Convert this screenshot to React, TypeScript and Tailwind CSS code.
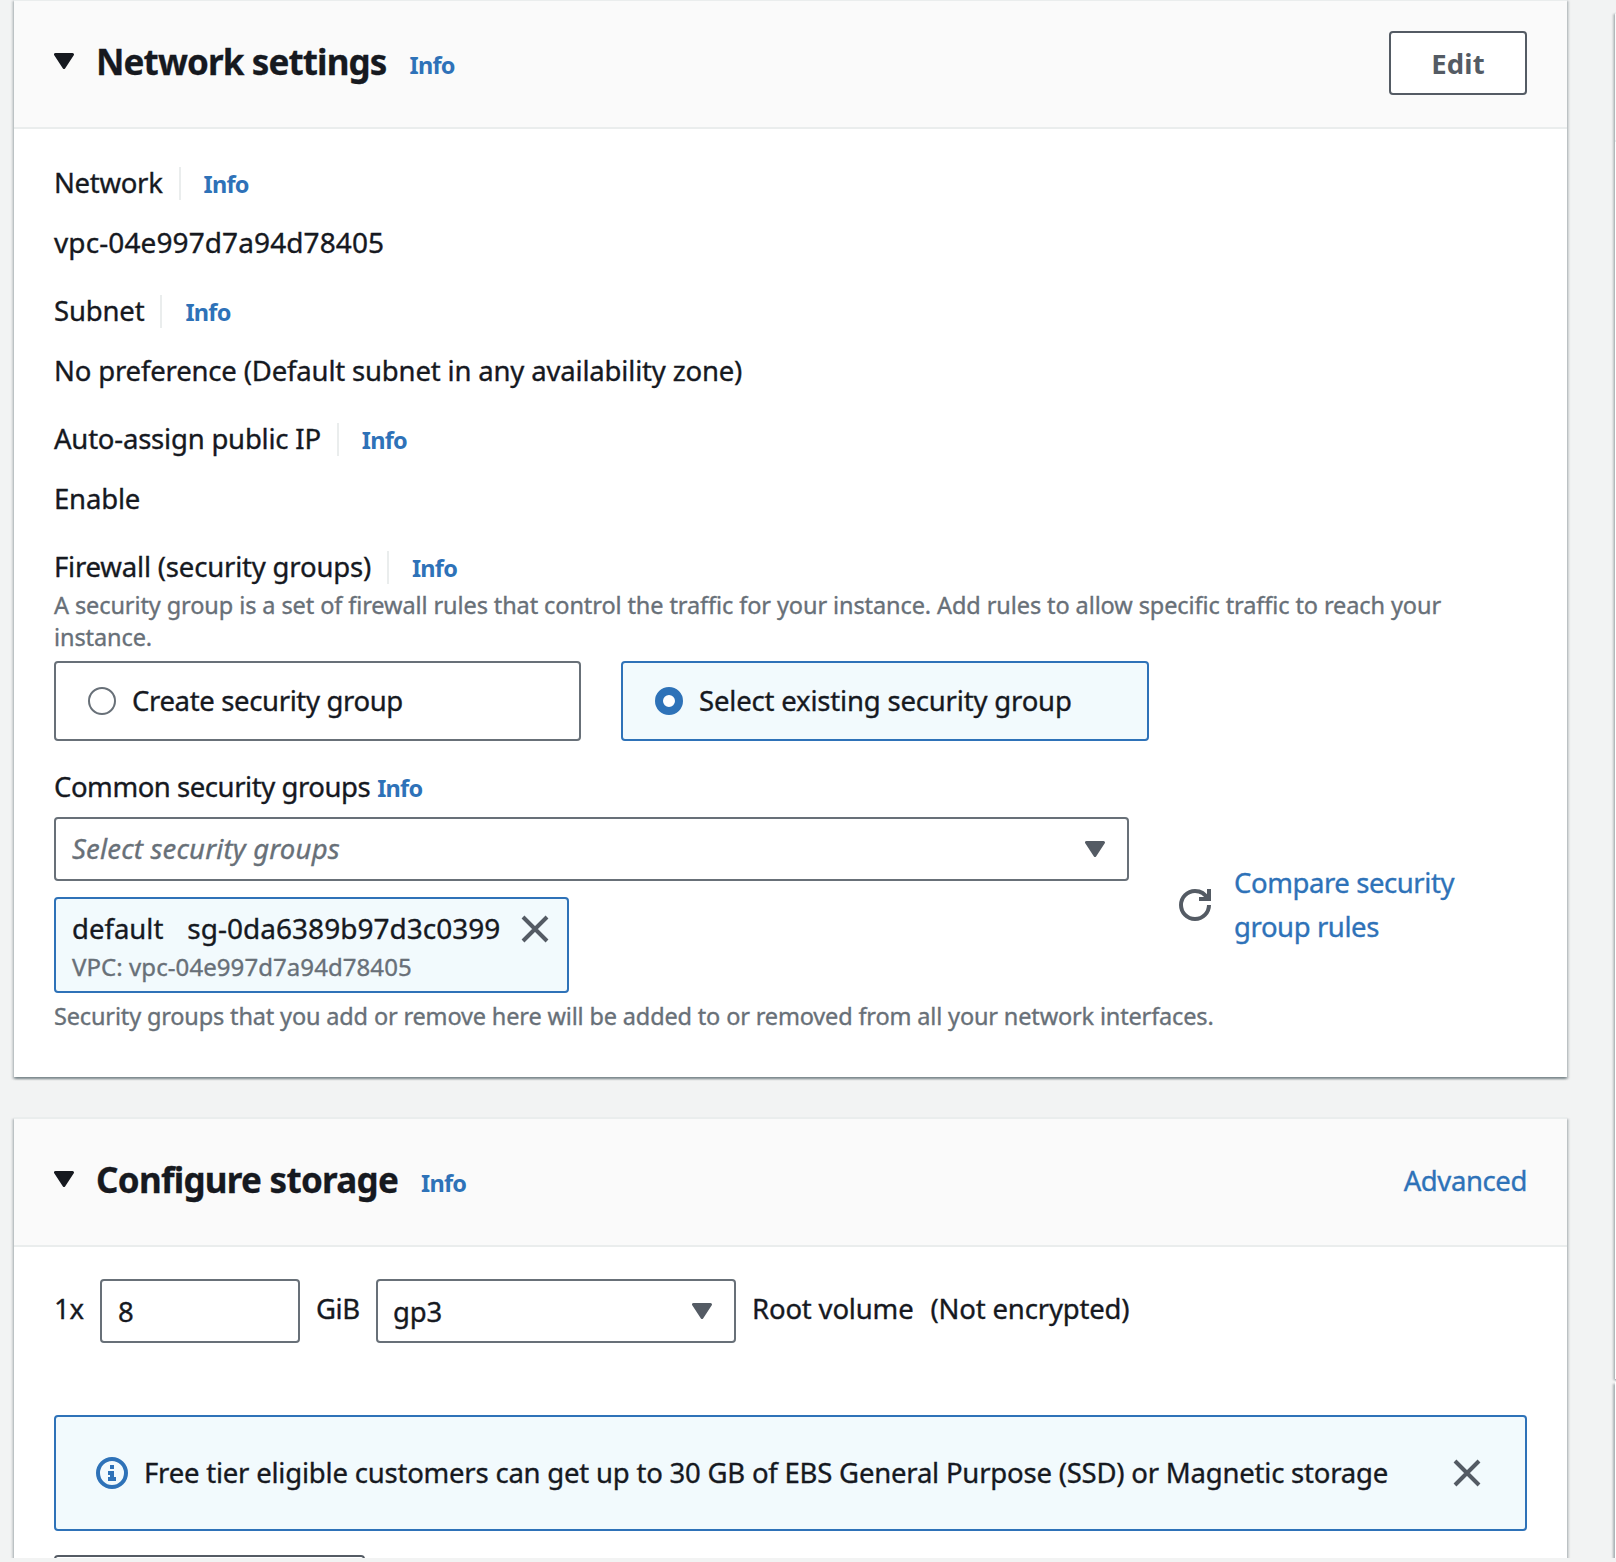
import type { ReactNode } from 'react';

function Caret({ className }: { className: string }) {
  return (
    <svg viewBox="0 0 20 16" className={`h-4 w-5 shrink-0 ${className}`}>
      <path d="M1.5 1.5h17L10 14.5z" fill="currentColor" stroke="currentColor" strokeWidth="3" strokeLinejoin="round" />
    </svg>
  );
}

function Close({ className }: { className: string }) {
  return (
    <svg viewBox="0 0 28 28" className={`size-7 shrink-0 text-[#545b64] ${className}`} fill="none" stroke="currentColor" strokeWidth="4">
      <path d="M2 2l24 24M26 2L2 26" />
    </svg>
  );
}

function Refresh() {
  return (
    <svg viewBox="0 0 16 16" className="size-8 shrink-0 text-[#545b64]" fill="none" stroke="currentColor" strokeWidth="2">
      <path d="M15 8c0 3.87-3.13 7-7 7s-7-3.13-7-7 3.13-7 7-7c2.79 0 5.2 1.63 6.33 4" />
      <path d="M10 5h5V0" />
    </svg>
  );
}

function InfoCircle() {
  return (
    <svg viewBox="0 0 16 16" className="size-8 shrink-0 text-[#2e72b8]" fill="none" stroke="currentColor" strokeWidth="2">
      <circle cx="8" cy="8" r="7" />
      <path d="M8 11V8H6M10 11H6M8 6V4" />
    </svg>
  );
}

function Info({ className = '' }: { className?: string }) {
  return (
    <a className={`text-[23.5px] leading-[34px] font-bold tracking-[-0.75px] text-[#2e72b8] [-webkit-text-stroke:0px] ${className}`}>Info</a>
  );
}

function Label({ children, className = '' }: { children: ReactNode; className?: string }) {
  return (
    <div className="flex h-[34px] items-center whitespace-nowrap">
      <span className={`leading-[32px] ${className}`}>{children}</span>
      <span className="ml-4 mr-[23px] h-[33px] w-0.5 bg-[#eaeded]" />
      <Info className="pt-0.5" />
    </div>
  );
}

function Field({ label, value, labelClass, valueClass = 'leading-[42px]' }: { label: string; value: string; labelClass?: string; valueClass?: string }) {
  return (
    <div className="pb-8">
      <Label className={labelClass}>{label}</Label>
      <div className={`mt-[22px] h-10 whitespace-nowrap ${valueClass}`}>{value}</div>
    </div>
  );
}

function Panel({
  title,
  titleClass,
  action,
  children,
  className = '',
}: {
  title: string;
  titleClass: string;
  action: ReactNode;
  children: ReactNode;
  className?: string;
}) {
  return (
    <section
      className={`w-[1553px] border-t-2 border-[#eaeded] bg-white shadow-[0_2px_2px_0_rgba(0,28,36,0.3),2px_2px_2px_0_rgba(0,28,36,0.15),-2px_2px_2px_0_rgba(0,28,36,0.15)] ${className}`}
    >
      <header className="flex h-32 items-center border-b-2 border-[#eaeded] bg-[#fafafa] pr-10 pl-10">
        <Caret className="mb-[7px] text-[#16191f]" />
        <h2 className={`ml-[22px] pb-1 text-[35px] leading-[44px] font-bold whitespace-nowrap [-webkit-text-stroke:0.3px] ${titleClass}`}>{title}</h2>
        <Info className="ml-[23px] pt-px" />
        <div className="ml-auto pb-0.5">{action}</div>
      </header>
      {children}
    </section>
  );
}

export default function App() {
  return (
    <div className="flex h-[1562px] w-[1616px] flex-col overflow-hidden bg-[#f2f3f3] font-['Noto_Sans',sans-serif] text-[27.5px] tracking-[-0.17px] text-[#16191f] [-webkit-text-stroke:0.35px]">
      <div className="flex h-[1558px] shrink-0 overflow-hidden">
        <main className="-mt-px ml-3.5 w-[1553px] shrink-0">
          <Panel
            title="Network settings"
            titleClass="tracking-[-0.88px]"
            action={
              <button className="block h-16 w-[138px] rounded-[4px] border-2 border-[#545b64] bg-white text-center leading-[57px] font-bold tracking-[0.1px] text-[#545b64] [-webkit-text-stroke:0px]">
                Edit
              </button>
            }
            className="h-[1078px]"
          >
            <div className="px-10 pt-[37px]">
              <Field label="Network" value="vpc-04e997d7a94d78405" labelClass="tracking-[-0.3px]" valueClass="text-[28px] leading-10 tracking-[0.1px]" />
              <Field label="Subnet" value="No preference (Default subnet in any availability zone)" />
              <Field label="Auto-assign public IP" value="Enable" labelClass="tracking-[-0.21px]" />
              <Label className="tracking-[-0.19px]">Firewall (security groups)</Label>
              <p className="mt-[5px] text-[23.5px] leading-8 tracking-[-0.095px] whitespace-nowrap text-[#687078]">
                A security group is a set of firewall rules that control the traffic for your instance. Add rules to allow specific traffic to reach your
                <br />
                instance.
              </p>
              <div className="mt-2 grid w-[1095px] grid-cols-[527px_528px] gap-10 whitespace-nowrap">
                <div className="flex h-20 items-center rounded-[4px] border-2 border-[#687078] bg-white pl-8">
                  <span className="size-7 rounded-full border-2 border-[#687078]" />
                  <span className="ml-4 tracking-[-0.36px]">Create security group</span>
                </div>
                <div className="flex h-20 items-center rounded-[4px] border-2 border-[#2e72b8] bg-[#f2fafd] pl-8">
                  <span className="size-7 rounded-full border-8 border-[#2e72b8] bg-white" />
                  <span className="ml-4 tracking-[-0.18px]">Select existing security group</span>
                </div>
              </div>
              <div className="mt-[25px] flex h-10 items-center whitespace-nowrap">
                <span className="pt-0.5 tracking-[-0.45px]">Common security groups</span>
                <Info className="ml-[7px] pt-[3px]" />
              </div>
              <div className="mt-[11px] flex items-center">
                <div className="w-[1075px]">
                  <div className="flex h-16 items-center justify-between rounded-[4px] border-2 border-[#687078] bg-white pr-[22px] pl-4 text-[#687078]">
                    <span className="tracking-[0.18px] italic">Select security groups</span>
                    <Caret className="text-[#545b64]" />
                  </div>
                  <div className="mt-4 h-24 w-[515px] rounded-[4px] border-2 border-[#2e72b8] bg-[#f2fafd] pt-[9px] pl-4 whitespace-nowrap">
                    <div className="flex h-10 items-center">
                      <span className="pt-0.5 tracking-[0px]">default</span>
                      <span className="ml-6 text-[28px] tracking-[0.02px]">sg-0da6389b97d3c0399</span>
                      <Close className="mt-0.5 ml-[20.5px]" />
                    </div>
                    <div className="mt-[3px] text-[24px] leading-8 tracking-[0.07px] text-[#687078]">VPC: vpc-04e997d7a94d78405</div>
                  </div>
                </div>
                <div className="ml-[50px] flex items-center">
                  <Refresh />
                  <a className="ml-[23px] leading-[44px] tracking-[-0.42px] whitespace-nowrap text-[#2e72b8]">
                    Compare security
                    <br />
                    group rules
                  </a>
                </div>
              </div>
              <p className="mt-[7px] text-[23.5px] leading-8 tracking-[-0.155px] whitespace-nowrap text-[#687078]">
                Security groups that you add or remove here will be added to or removed from all your network interfaces.
              </p>
            </div>
          </Panel>

          <Panel
            title="Configure storage"
            titleClass="tracking-[-0.73px]"
            action={<a className="block pb-px tracking-[-0.4px] text-[#2e72b8]">Advanced</a>}
            className="mt-10 h-[600px]"
          >
            <div className="px-10 pt-8">
              <div className="flex h-16 items-center whitespace-nowrap">
                <span className="w-[46px] pb-1">1x</span>
                <div className="h-16 w-[200px] rounded-[4px] border-2 border-[#687078] bg-white pl-4 leading-[62px]">8</div>
                <span className="w-[76px] pb-1 pl-4 tracking-[-0.4px]">GiB</span>
                <div className="flex h-16 w-[360px] items-center justify-between rounded-[4px] border-2 border-[#687078] bg-white pr-[22px] pl-[15px]">
                  <span className="pt-px">gp3</span>
                  <Caret className="text-[#545b64]" />
                </div>
                <span className="pb-1 pl-4">Root volume</span>
                <span className="pb-1 pl-[17px]">(Not encrypted)</span>
              </div>
              <div className="mt-[72px] flex h-[116px] items-center rounded-[4px] border-2 border-[#2e72b8] bg-[#f2fafd] pr-[44px] pl-10 whitespace-nowrap">
                <InfoCircle />
                <span className="ml-4 tracking-[-0.21px]">
                  Free tier eligible customers can get up to 30 GB of EBS General Purpose (SSD) or Magnetic storage
                </span>
                <Close className="ml-auto" />
              </div>
              <div className="mt-6 h-16 w-[311px] rounded-[4px] border-2 border-[#545b64] bg-white" />
            </div>
          </Panel>
        </main>
        <aside className="ml-12 flex w-10 shrink-0 flex-col gap-[3px] pt-[13px]">
          <div className="h-[1366px] shrink-0 border-t border-[#eaeded] bg-white shadow-[0_1px_2px_0_rgba(0,28,36,0.3),-2px_1px_2px_0_rgba(0,28,36,0.2)]">
            <div className="h-32 border-b-2 border-[#eaeded] bg-[#fafafa]" />
          </div>
          <div className="h-[300px] shrink-0 bg-white shadow-[-2px_2px_2px_0_rgba(0,28,36,0.3)]" />
        </aside>
      </div>
    </div>
  );
}
